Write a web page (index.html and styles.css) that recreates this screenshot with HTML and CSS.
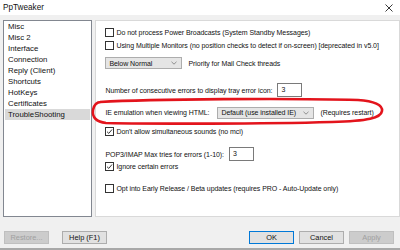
FILE: index.html
```html
<!DOCTYPE html>
<html lang="en">
<head>
<meta charset="UTF-8">
<title>PpTweaker</title>
<link rel="stylesheet" href="styles.css">
</head>
<body>

<div class="dialog">
  <div class="titlebar">
    <span class="title">PpTweaker</span>
    <svg class="close" width="8" height="8" viewBox="0 0 8 8"><path d="M0.5 0.5 L7.5 7.5 M7.5 0.5 L0.5 7.5" stroke="#222" stroke-width="0.9"/></svg>
  </div>

  <div class="main">
    <ul class="pages">
      <li>Misc</li>
      <li>Misc 2</li>
      <li>Interface</li>
      <li>Connection</li>
      <li>Reply (Client)</li>
      <li>Shortcuts</li>
      <li>HotKeys</li>
      <li>Certificates</li>
      <li class="selected">TroubleShooting</li>
    </ul>

    <div class="panel">
      <div class="row check r1"><span class="box"></span>Do not process Power Broadcasts (System Standby Messages)</div>
      <div class="row check r2"><span class="box"></span>Using Multiple Monitors (no position checks to detect if on-screen) [deprecated in v5.0]</div>
      <div class="row r3">
        <div class="select narrow">Below Normal<svg class="chev" width="6" height="4" viewBox="0 0 6 4"><path d="M0.5 0.8 L3 3.2 L5.5 0.8" fill="none" stroke="#777" stroke-width="0.8"/></svg></div>
        <span class="after">Priority for Mail Check threads</span>
      </div>
      <div class="row r4">
        <span>Number of consecutive errors to display tray error icon:</span>
        <div class="input">3</div>
      </div>
      <div class="row r5">
        <span>IE emulation when viewing HTML:</span>
        <div class="select wide">Default (use installed IE)<svg class="chev" width="6" height="4" viewBox="0 0 6 4"><path d="M0.5 0.8 L3 3.2 L5.5 0.8" fill="none" stroke="#777" stroke-width="0.8"/></svg></div>
        <span class="after">(Requires restart)</span>
      </div>
      <div class="row check r6"><span class="box"><svg width="7" height="7" viewBox="0 0 7 7"><path d="M1 3.7 L2.8 5.4 L6 1.5" fill="none" stroke="#222" stroke-width="0.9"/></svg></span>Don't allow simultaneous sounds (no mci)</div>
      <div class="row r7">
        <span>POP3/IMAP Max tries for errors (1-10):</span>
        <div class="input">3</div>
      </div>
      <div class="row check r8"><span class="box"><svg width="7" height="7" viewBox="0 0 7 7"><path d="M1 3.7 L2.8 5.4 L6 1.5" fill="none" stroke="#222" stroke-width="0.9"/></svg></span>Ignore certain errors</div>
      <div class="row check r9"><span class="box"></span>Opt into Early Release / Beta updates (requires PRO - Auto-Update only)</div>

      <!-- hand drawn marker around the IE row -->
      <svg class="marker" width="294" height="28" viewBox="0 0 294 28">
        <path d="M8 4 C60 1 200 0 266 2 C282 3 291 7 290 13 C289 20 276 23 240 24 C170 26 60 26 14 25 C4 24 0 19 1 12 C2 7 4 4 9 4" fill="none" stroke="#e3141c" stroke-width="2.6"/>
      </svg>
    </div>
  </div>

  <div class="buttons">
    <button class="btn disabled">Restore...</button>
    <button class="btn help">Help (F1)</button>
    <span class="spacer"></span>
    <button class="btn default">OK</button>
    <button class="btn">Cancel</button>
    <button class="btn disabled">Apply</button>
  </div>
</div>

</body>
</html>
```

FILE: styles.css
```css
body {
  margin: 0;
  background: #f0f0f0;
  font-family: "Liberation Sans", Arial, sans-serif;
  font-size: 7px;
  color: #111;
}
.dialog {
  width: 400px;
  height: 250px;
  box-sizing: border-box;
  border-bottom: 2px solid #a8a8a8;
  display: flex;
  flex-direction: column;
}
.titlebar {
  height: 15px;
  background: #fff;
  display: flex;
  align-items: center;
  justify-content: space-between;
  padding: 0 7px 0 3px;
}
.title {
  font-size: 8.2px;
}
.main {
  display: flex;
  margin-top: 5px;
  padding-left: 3px;
  height: 197px;
}
.pages {
  list-style: none;
  margin: 0;
  padding: 0 1px;
  width: 87px;
  background: #fff;
  border: 1px solid #828790;
}
.pages li {
  height: 11px;
  line-height: 11px;
  padding-left: 3px;
  font-size: 7.8px;
}
.pages li.selected {
  background: #d9d9d9;
}
.panel {
  position: relative;
  margin-left: 3px;
  width: 299px;
  background: #fff;
  border: 1px solid #d9d9d9;
  padding-left: 9px;
  letter-spacing: -0.06px;
}
.row {
  display: flex;
  align-items: center;
  white-space: nowrap;
}
.check {
  height: 10px;
}
.box {
  flex-shrink: 0;
  width: 7px;
  height: 7px;
  border: 1px solid #333;
  background: #fff;
  margin-right: 2px;
  display: flex;
}
.select {
  flex-shrink: 0;
  height: 12px;
  box-sizing: border-box;
  border: 1px solid #adadad;
  background: #e5e5e5;
  display: flex;
  align-items: center;
  justify-content: space-between;
  padding: 0 4px 0 3px;
}
.select.narrow {
  width: 77px;
}
.select.wide {
  width: 97px;
  margin-left: 8px;
}
.after {
  margin-left: 6px;
}
.input {
  flex-shrink: 0;
  width: 25px;
  height: 14px;
  box-sizing: border-box;
  border: 1px solid #7a7a7a;
  padding-left: 3px;
  line-height: 12px;
  margin-left: 5px;
}
.r1 { margin-top: 6px; }
.r2 { margin-top: 3px; }
.r3 { margin-top: 7px; height: 12px; }
.r4 { margin-top: 14px; height: 14px; }
.r5 { margin-top: 9px; height: 13px; }
.r6 { margin-top: 7px; }
.r7 { margin-top: 11px; height: 14px; }
.r8 { margin-top: 0; }
.r9 { margin-top: 12px; }
.marker {
  position: absolute;
  left: -4px;
  top: 77px;
  overflow: visible;
}
.buttons {
  display: flex;
  align-items: center;
  margin-top: 14px;
  padding: 0 6px 0 4px;
  gap: 5px;
}
.btn {
  width: 45px;
  height: 13px;
  padding: 0;
  font-family: inherit;
  font-size: 7.4px;
  color: #111;
  background: #e1e1e1;
  border: 1px solid #adadad;
}
.btn.help {
  margin-left: 8px;
}
.btn.default {
  border-color: #0078d7;
}
.btn.disabled {
  color: #a0a0a0;
  background: #cccccc;
  border-color: #bfbfbf;
}
.spacer {
  flex: 1;
}
```
